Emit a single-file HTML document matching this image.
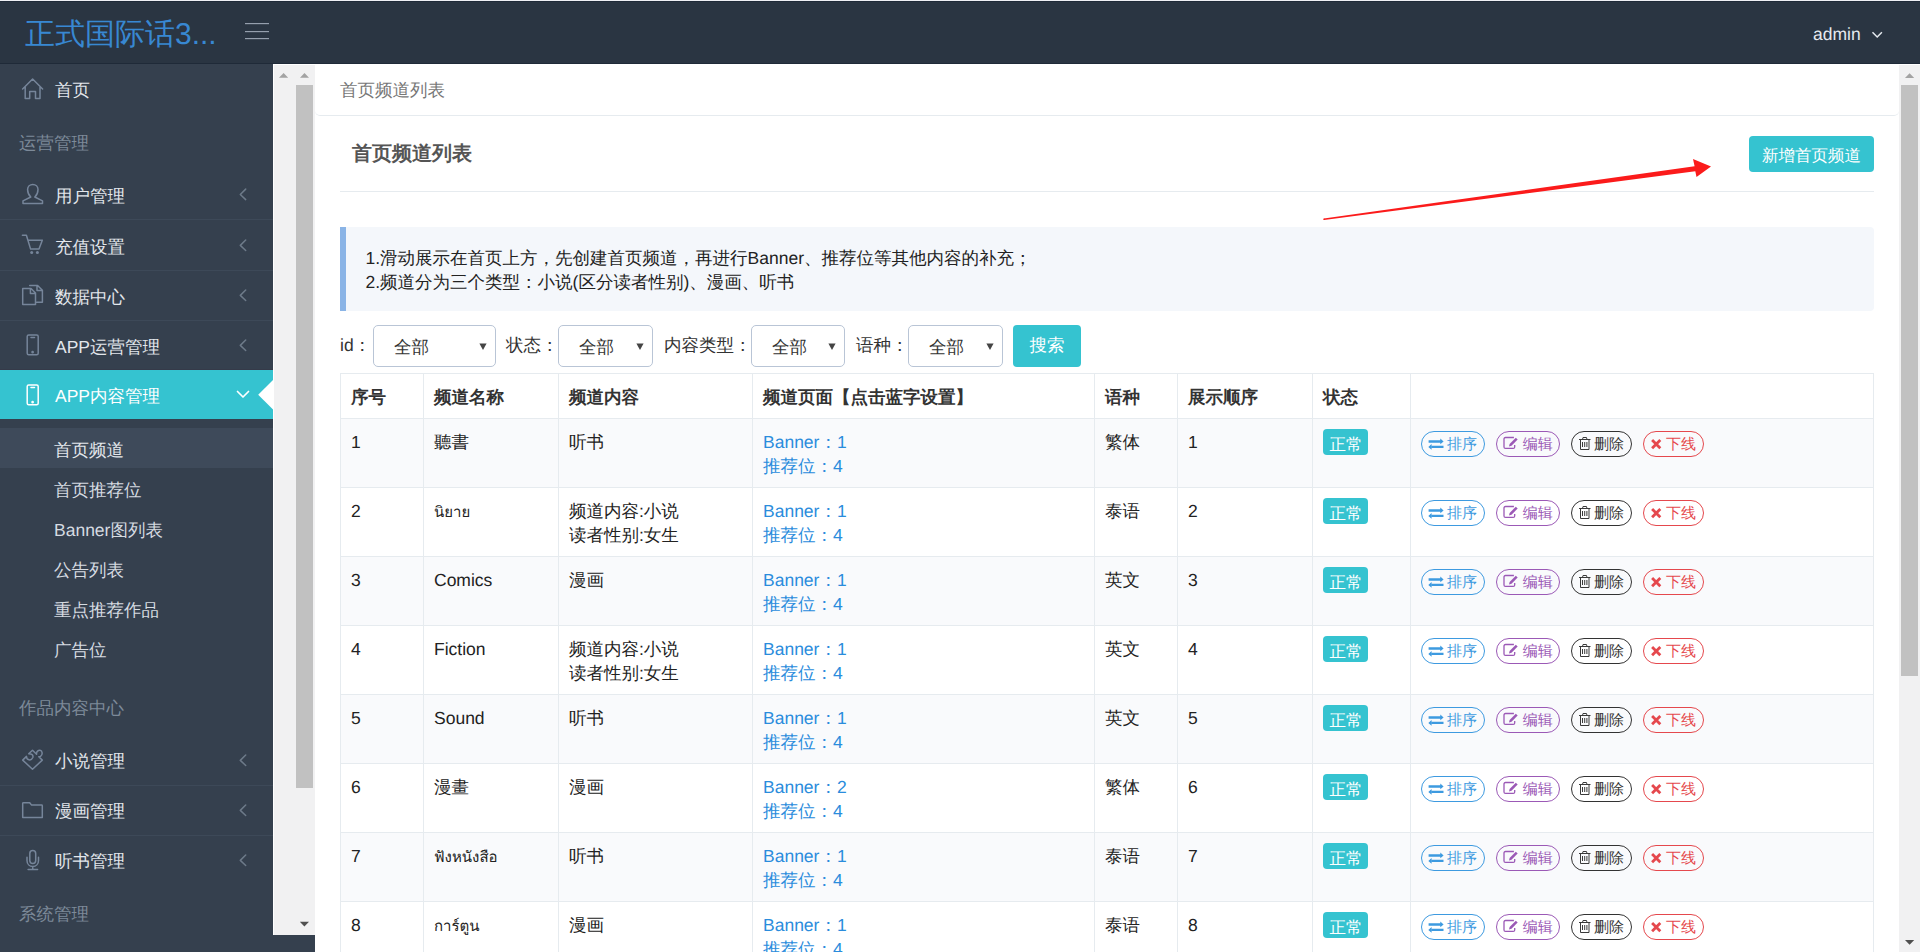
<!DOCTYPE html>
<html><head><meta charset="utf-8">
<style>
*{box-sizing:border-box;margin:0;padding:0}
html,body{width:1920px;height:952px;overflow:hidden;background:#fff;text-rendering:geometricPrecision;font-family:"Liberation Sans",sans-serif;font-size:17.5px;color:#333}
.abs{position:absolute}
#top{position:absolute;left:0;top:0;width:1920px;height:64px;background:#2a3542;border-top:1px solid #eff0f4}
#top:before{content:"";position:absolute;left:0;top:0;width:100%;height:1px;background:#1f2a38}
#top:after{content:"";position:absolute;left:0;bottom:0;width:100%;height:1px;background:#1f2a38}
#logo{position:absolute;left:25px;top:14px;font-size:30px;color:#3888d2;line-height:40px;white-space:nowrap}
.hb{position:absolute;left:245px;width:24px;height:1px;background:#959fad;box-shadow:0 0.6px 0 rgba(149,159,173,.3)}
#admin{position:absolute;left:1813px;top:21px;color:#e5e9ee;font-size:17.5px;line-height:24px}
#side{position:absolute;left:0;top:64px;width:273px;height:888px;background:#35404e;overflow:hidden}
.mi{position:absolute;left:0;width:273px;height:50px;border-bottom:1px solid #3d4958;color:#e3e7ec}
.mi .t{position:absolute;left:55px;top:14px;line-height:24px;white-space:nowrap}
.mi svg.ic{position:absolute;left:22px;top:15px}
.mi .ch{position:absolute;left:238px;top:19px}
.sec{position:absolute;left:19px;color:#7d8a99;line-height:24px;margin-top:1px;white-space:nowrap}
.sub{position:absolute;left:0;width:273px;height:40px;color:#d6dbe1}
.sub .t{position:absolute;left:54px;top:10px;line-height:24px;white-space:nowrap}
#sb1{position:absolute;left:273px;top:64px;width:42px;height:871px;background:#f1f1f2;border-left:1px solid #fff;border-top:1px solid #fff}
#sbb{position:absolute;left:273px;top:935px;width:42px;height:17px;background:#35404e}
#sb2{position:absolute;left:1899px;top:65px;width:21px;height:887px;background:#f1f1f2}
.mi.act{background:#35c3d0;border-bottom:none;height:49px;color:#fff}
.sub.act{background:#3e4a5a;color:#e3e7ec}
#bc{position:absolute;left:315px;top:64px;width:1584px;height:52px;border-bottom:1px solid #e6ebef;border-radius:0 0 5px 5px;padding:14px 0 0 25px;color:#777;line-height:24px}
#ptitle{position:absolute;left:352px;top:142px;font-size:20px;font-weight:bold;color:#555;line-height:24px}
#addbtn{position:absolute;left:1749px;top:136px;width:125px;height:36px;background:#35c3d0;border-radius:4px;color:#fff;font-size:16.5px;line-height:36px;padding-top:1.5px;text-align:center}
#divl{position:absolute;left:340px;top:191px;width:1534px;height:1px;background:#e6ebef}
#info{position:absolute;left:340px;top:227px;width:1534px;height:84px;background:#f4f7fb;border-left:6px solid #8ab4e6;border-radius:0 4px 4px 0;padding:19px 0 0 19.5px;line-height:24px;color:#222}
.lbl{position:absolute;top:332.5px;line-height:24px;color:#333}
.sel{position:absolute;top:325px;height:41.5px;border:1px solid #b9c5d6;border-radius:5px;padding:9px 0 0 20px;line-height:24px;color:#333}
.sel i{position:absolute;right:8px;top:17px;width:7px;height:7px;background:linear-gradient(#0000,#0000)}.sel svg{position:absolute;right:8.4px;top:17px}
#sbtn{position:absolute;left:1013px;top:325px;width:68px;height:42px;background:#35c3d0;border-radius:4px;color:#fff;line-height:41px;text-align:center;font-size:17.5px}
#tbl{position:absolute;left:340px;top:373px;width:1534px;border-collapse:collapse;table-layout:fixed}
#tbl th,#tbl td{border:1px solid #e6ebef;text-align:left;vertical-align:top;line-height:24px;padding:0 10px}
#tbl th{height:45px;padding-top:11px;font-weight:bold;color:#333}
#tbl td{height:69px;padding-top:11px;color:#222}
#tbl tr.odd td{background:#f9fafc}
#tbl td.lk{color:#2a8cdc}
.badge{display:inline-block;background:#35c3d0;color:#fff;border-radius:4px;height:26px;line-height:26px;padding:3px 0 0 1px;width:45px;text-align:center;font-size:16.5px;font-weight:normal;margin-top:-1px;vertical-align:top;overflow:hidden}
.ops{white-space:nowrap}.thai{font-size:15px}
.ob{display:inline-block;height:26px;border:1px solid;border-radius:13px;line-height:24px;font-size:15px;margin-right:11px;vertical-align:top;margin-top:1px;padding:0;text-align:center}
.ob{position:relative}.ob svg{position:absolute;left:0;top:0}.ob b{position:absolute;top:1px;font-weight:normal;line-height:24px}.b1 b{left:25px}.b2 b{left:25.8px}.b3 b,.b4 b{left:22px}
.b1,.b2{width:64px}.b3,.b4{width:61px}
.b1{border-color:#3d9ae0;color:#3d9ae0}
.b2{border-color:#9b59b6;color:#9b59b6}
.b3{border-color:#333;color:#333}
.b4{border-color:#e5484d;color:#e5484d}
.thumb{position:absolute;background:#c1c1c1}
</style></head><body>
<div id="top">
  <div id="logo">正式国际话3...</div>
  <div class="hb" style="top:22px"></div>
  <div class="hb" style="top:30px"></div>
  <div class="hb" style="top:37px"></div>
  <div id="admin">admin</div>
</div>
<div id="side">
  <div class="mi" style="top:0;border-bottom:none"><span class="t">首页</span></div>
  <div class="sec" style="top:66px">运营管理</div>
  <div class="mi" style="top:106px"><span class="t">用户管理</span></div>
  <div class="mi" style="top:157px"><span class="t">充值设置</span></div>
  <div class="mi" style="top:207px"><span class="t">数据中心</span></div>
  <div class="mi" style="top:257px;height:49px;border-bottom-color:#353a49"><span class="t">APP运营管理</span></div>
  <div class="mi act" style="top:306px"><span class="t">APP内容管理</span></div>
  <div class="sub act" style="top:364px"><span class="t">首页频道</span></div>
  <div class="sub" style="top:404px"><span class="t">首页推荐位</span></div>
  <div class="sub" style="top:444px"><span class="t">Banner图列表</span></div>
  <div class="sub" style="top:484px"><span class="t">公告列表</span></div>
  <div class="sub" style="top:524px"><span class="t">重点推荐作品</span></div>
  <div class="sub" style="top:564px"><span class="t">广告位</span></div>
  <div class="sec" style="top:631px">作品内容中心</div>
  <div class="mi" style="top:672px"><span class="t" style="top:12.5px">小说管理</span></div>
  <div class="mi" style="top:722px"><span class="t" style="top:12.5px">漫画管理</span></div>
  <div class="mi" style="top:772px;border-bottom:none"><span class="t" style="top:12.5px">听书管理</span></div>
  <div class="sec" style="top:837px">系统管理</div>
</div>
<svg id="icons" width="320" height="952" style="position:absolute;left:0;top:0" fill="none" stroke="#76859a" stroke-width="1.5" stroke-linejoin="round" stroke-linecap="round">
  <path d="M22.6,89 L32.6,79 L42.6,89 M25.2,87 V98.6 H29.7 V91.5 H35.5 V98.6 H40 V87"/>
  <path d="M30.8,197 C28.6,195 27.6,192 27.6,189.5 C27.6,186.5 30,184.4 32.8,184.4 C35.6,184.4 38,186.5 38,189.5 C38,192 37,195 34.8,197 L42.5,200.8 V203.4 H23 V200.8 Z"/>
  <path d="M22.4,235.2 H26.4 L30.6,249.1 H39 L42.3,240.3 H28.3"/>
  <circle cx="31.7" cy="252.4" r="1.5" fill="#76859a" stroke="none"/><circle cx="37.4" cy="252.4" r="1.5" fill="#76859a" stroke="none"/>
  <path d="M22.7,288.5 H31 L35.5,293 V304.6 H22.7 Z M30.4,288.5 V293.5 H35.5 M29.7,285.5 H37.6 L42.4,290.3 V302.2 H36.8 M37,285.5 V290.6 H42.4"/>
  <rect x="27.2" y="335" width="11" height="19.8" rx="1.5"/><path d="M31,337.6 H34.5"/><circle cx="32.6" cy="352.2" r="0.6" fill="#76859a"/>
  <path d="M22.7,760.1 L26.5,756.4 C26.5,760 31,761.5 32.8,757.5 C33.5,755.5 32,754 30.5,754 L28.7,753.8 L32.5,750.2 L36.6,754.2 C36.2,751.5 38.5,750 40,750.2 C42.5,750.6 43,754.5 40.5,756.4 L38.8,756.7 L42.3,760.1 L32.5,769.3 Z"/>
  <path d="M22.7,817.6 V803.3 Q22.7,802.7 23.5,802.7 H29.7 L31.6,805.1 H41.6 Q42.3,805.1 42.3,805.8 V817.6 Z"/>
  <rect x="29.8" y="850.5" width="5.9" height="13" rx="2.95"/><path d="M27,857.3 V860.5 C27,864 29.5,866.5 32.75,866.5 C36,866.5 38.5,864 38.5,860.5 V857.3 M32.75,866.5 V869.4 M28.1,869.4 H37.6"/>
  <g stroke="#6d7a89"><path d="M245.7,189.1 L240.3,194.5 L245.7,199.6"/><path d="M245.7,240 L240.3,245.4 L245.7,250.5"/><path d="M245.7,290 L240.3,295.4 L245.7,300.5"/><path d="M245.7,340 L240.3,345.4 L245.7,350.5"/>
  <path d="M245.7,755 L240.3,760.4 L245.7,765.5"/><path d="M245.7,805 L240.3,810.4 L245.7,815.5"/><path d="M245.7,855 L240.3,860.4 L245.7,865.5"/></g>
  <g stroke="#fff"><rect x="27.2" y="385" width="11" height="19.8" rx="1.5"/><path d="M31,387.6 H34.5"/><circle cx="32.6" cy="402.2" r="0.6" fill="#fff"/>
  <path d="M237.5,391.5 L243,397 L248.5,391.5" stroke-width="1.7"/></g>
  <path d="M273,380 L258.2,394.8 L273,409.6 Z" fill="#fff" stroke="none"/>
</svg>
<div id="sb1"><div class="thumb" style="left:22px;top:20px;width:17px;height:703px"></div></div>

<div id="sbb"></div>
<div id="sb2"><div class="thumb" style="left:2px;top:20px;width:17px;height:591px"></div></div>
<div id="main">
  <div id="bc">首页频道列表</div>
  <div id="ptitle">首页频道列表</div>
  <div id="addbtn">新增首页频道</div>
  <div id="divl"></div>
  <svg style="position:absolute;left:0;top:0" width="1920" height="952"><path d="M1323.9,218.4 L1694.6,166.2 L1693,159 L1711,166.5 L1696.5,177 L1695.3,171.2 L1324.1,220 Z" fill="#fb1b1b"/><circle cx="1324" cy="219.2" r="0.8" fill="#fb1b1b"/></svg>
  <div id="info"><div>1.滑动展示在首页上方，先创建首页频道，再进行Banner、推荐位等其他内容的补充；</div><div>2.频道分为三个类型：小说(区分读者性别)、漫画、听书</div></div>
  <div class="lbl" style="left:340px">id：</div>
  <div class="sel" style="left:373px;width:123px">全部<svg width="8" height="8"><path d="M0.4,0.6 H7.6 L4,7 Z" fill="#444"/></svg></div>
  <div class="lbl" style="left:506px">状态：</div>
  <div class="sel" style="left:558px;width:95px">全部<svg width="8" height="8"><path d="M0.4,0.6 H7.6 L4,7 Z" fill="#444"/></svg></div>
  <div class="lbl" style="left:664px">内容类型：</div>
  <div class="sel" style="left:751px;width:94px">全部<svg width="8" height="8"><path d="M0.4,0.6 H7.6 L4,7 Z" fill="#444"/></svg></div>
  <div class="lbl" style="left:856px">语种：</div>
  <div class="sel" style="left:908px;width:95px">全部<svg width="8" height="8"><path d="M0.4,0.6 H7.6 L4,7 Z" fill="#444"/></svg></div>
  <div id="sbtn">搜索</div>
  <table id="tbl">
    <colgroup><col style="width:83px"><col style="width:135px"><col style="width:194px"><col style="width:342px"><col style="width:83px"><col style="width:135px"><col style="width:98px"><col style="width:463px"></colgroup>
    <tr class="hd"><th>序号</th><th>频道名称</th><th>频道内容</th><th>频道页面【点击蓝字设置】</th><th>语种</th><th>展示顺序</th><th>状态</th><th></th></tr>
    <tr class="odd"><td>1</td><td>聽書</td><td>听书</td><td class="lk">Banner：1<br>推荐位：4</td><td>繁体</td><td>1</td><td><span class="badge">正常</span></td><td class="ops"><span class="ob b1"><svg width="62" height="24"><path d="M6.6,9.45 H19 M9.3,14.9 H21.5" stroke="#3d9ae0" stroke-width="2.4"/><path d="M18.3,6.6 L21.6,9.45 L18.3,12.3 Z M9.6,12.1 L6.3,14.9 L9.6,17.7 Z" fill="#3d9ae0"/></svg><b>排序</b></span><span class="ob b2"><svg width="62" height="24"><path d="M16.9,5.5 H8.5 Q7,5.5 7,7 V14.9 Q7,16.4 8.5,16.4 H16.2 Q17.7,16.4 17.7,14.9 V13" fill="none" stroke="#9b59b6" stroke-width="1.3"/><path d="M12,14.6 L12.6,11.9 L18.8,5.7 L20.7,7.6 L14.5,13.8 Z" fill="#9b59b6"/></svg><b>编辑</b></span><span class="ob b3"><svg width="59" height="24"><path d="M7,7.5 H18.5 M10.5,7.5 L11,5.5 H14.5 L15,7.5 M8.5,7.5 V17.5 H17 V7.5 M10.5,10 V15 M12.7,10 V15 M14.9,10 V15" fill="none" stroke="#3a3a3a" stroke-width="1"/></svg><b>删除</b></span><span class="ob b4"><svg width="59" height="24"><path d="M8.1,8.1 L16.3,16.3 M16.3,8.1 L8.1,16.3" stroke="#e5484d" stroke-width="2.8"/></svg><b>下线</b></span></td></tr>
    <tr class="even"><td>2</td><td><span class="thai">นิยาย</span></td><td>频道内容:小说<br>读者性别:女生</td><td class="lk">Banner：1<br>推荐位：4</td><td>泰语</td><td>2</td><td><span class="badge">正常</span></td><td class="ops"><span class="ob b1"><svg width="62" height="24"><path d="M6.6,9.45 H19 M9.3,14.9 H21.5" stroke="#3d9ae0" stroke-width="2.4"/><path d="M18.3,6.6 L21.6,9.45 L18.3,12.3 Z M9.6,12.1 L6.3,14.9 L9.6,17.7 Z" fill="#3d9ae0"/></svg><b>排序</b></span><span class="ob b2"><svg width="62" height="24"><path d="M16.9,5.5 H8.5 Q7,5.5 7,7 V14.9 Q7,16.4 8.5,16.4 H16.2 Q17.7,16.4 17.7,14.9 V13" fill="none" stroke="#9b59b6" stroke-width="1.3"/><path d="M12,14.6 L12.6,11.9 L18.8,5.7 L20.7,7.6 L14.5,13.8 Z" fill="#9b59b6"/></svg><b>编辑</b></span><span class="ob b3"><svg width="59" height="24"><path d="M7,7.5 H18.5 M10.5,7.5 L11,5.5 H14.5 L15,7.5 M8.5,7.5 V17.5 H17 V7.5 M10.5,10 V15 M12.7,10 V15 M14.9,10 V15" fill="none" stroke="#3a3a3a" stroke-width="1"/></svg><b>删除</b></span><span class="ob b4"><svg width="59" height="24"><path d="M8.1,8.1 L16.3,16.3 M16.3,8.1 L8.1,16.3" stroke="#e5484d" stroke-width="2.8"/></svg><b>下线</b></span></td></tr>
    <tr class="odd"><td>3</td><td>Comics</td><td>漫画</td><td class="lk">Banner：1<br>推荐位：4</td><td>英文</td><td>3</td><td><span class="badge">正常</span></td><td class="ops"><span class="ob b1"><svg width="62" height="24"><path d="M6.6,9.45 H19 M9.3,14.9 H21.5" stroke="#3d9ae0" stroke-width="2.4"/><path d="M18.3,6.6 L21.6,9.45 L18.3,12.3 Z M9.6,12.1 L6.3,14.9 L9.6,17.7 Z" fill="#3d9ae0"/></svg><b>排序</b></span><span class="ob b2"><svg width="62" height="24"><path d="M16.9,5.5 H8.5 Q7,5.5 7,7 V14.9 Q7,16.4 8.5,16.4 H16.2 Q17.7,16.4 17.7,14.9 V13" fill="none" stroke="#9b59b6" stroke-width="1.3"/><path d="M12,14.6 L12.6,11.9 L18.8,5.7 L20.7,7.6 L14.5,13.8 Z" fill="#9b59b6"/></svg><b>编辑</b></span><span class="ob b3"><svg width="59" height="24"><path d="M7,7.5 H18.5 M10.5,7.5 L11,5.5 H14.5 L15,7.5 M8.5,7.5 V17.5 H17 V7.5 M10.5,10 V15 M12.7,10 V15 M14.9,10 V15" fill="none" stroke="#3a3a3a" stroke-width="1"/></svg><b>删除</b></span><span class="ob b4"><svg width="59" height="24"><path d="M8.1,8.1 L16.3,16.3 M16.3,8.1 L8.1,16.3" stroke="#e5484d" stroke-width="2.8"/></svg><b>下线</b></span></td></tr>
    <tr class="even"><td>4</td><td>Fiction</td><td>频道内容:小说<br>读者性别:女生</td><td class="lk">Banner：1<br>推荐位：4</td><td>英文</td><td>4</td><td><span class="badge">正常</span></td><td class="ops"><span class="ob b1"><svg width="62" height="24"><path d="M6.6,9.45 H19 M9.3,14.9 H21.5" stroke="#3d9ae0" stroke-width="2.4"/><path d="M18.3,6.6 L21.6,9.45 L18.3,12.3 Z M9.6,12.1 L6.3,14.9 L9.6,17.7 Z" fill="#3d9ae0"/></svg><b>排序</b></span><span class="ob b2"><svg width="62" height="24"><path d="M16.9,5.5 H8.5 Q7,5.5 7,7 V14.9 Q7,16.4 8.5,16.4 H16.2 Q17.7,16.4 17.7,14.9 V13" fill="none" stroke="#9b59b6" stroke-width="1.3"/><path d="M12,14.6 L12.6,11.9 L18.8,5.7 L20.7,7.6 L14.5,13.8 Z" fill="#9b59b6"/></svg><b>编辑</b></span><span class="ob b3"><svg width="59" height="24"><path d="M7,7.5 H18.5 M10.5,7.5 L11,5.5 H14.5 L15,7.5 M8.5,7.5 V17.5 H17 V7.5 M10.5,10 V15 M12.7,10 V15 M14.9,10 V15" fill="none" stroke="#3a3a3a" stroke-width="1"/></svg><b>删除</b></span><span class="ob b4"><svg width="59" height="24"><path d="M8.1,8.1 L16.3,16.3 M16.3,8.1 L8.1,16.3" stroke="#e5484d" stroke-width="2.8"/></svg><b>下线</b></span></td></tr>
    <tr class="odd"><td>5</td><td>Sound</td><td>听书</td><td class="lk">Banner：1<br>推荐位：4</td><td>英文</td><td>5</td><td><span class="badge">正常</span></td><td class="ops"><span class="ob b1"><svg width="62" height="24"><path d="M6.6,9.45 H19 M9.3,14.9 H21.5" stroke="#3d9ae0" stroke-width="2.4"/><path d="M18.3,6.6 L21.6,9.45 L18.3,12.3 Z M9.6,12.1 L6.3,14.9 L9.6,17.7 Z" fill="#3d9ae0"/></svg><b>排序</b></span><span class="ob b2"><svg width="62" height="24"><path d="M16.9,5.5 H8.5 Q7,5.5 7,7 V14.9 Q7,16.4 8.5,16.4 H16.2 Q17.7,16.4 17.7,14.9 V13" fill="none" stroke="#9b59b6" stroke-width="1.3"/><path d="M12,14.6 L12.6,11.9 L18.8,5.7 L20.7,7.6 L14.5,13.8 Z" fill="#9b59b6"/></svg><b>编辑</b></span><span class="ob b3"><svg width="59" height="24"><path d="M7,7.5 H18.5 M10.5,7.5 L11,5.5 H14.5 L15,7.5 M8.5,7.5 V17.5 H17 V7.5 M10.5,10 V15 M12.7,10 V15 M14.9,10 V15" fill="none" stroke="#3a3a3a" stroke-width="1"/></svg><b>删除</b></span><span class="ob b4"><svg width="59" height="24"><path d="M8.1,8.1 L16.3,16.3 M16.3,8.1 L8.1,16.3" stroke="#e5484d" stroke-width="2.8"/></svg><b>下线</b></span></td></tr>
    <tr class="even"><td>6</td><td>漫畫</td><td>漫画</td><td class="lk">Banner：2<br>推荐位：4</td><td>繁体</td><td>6</td><td><span class="badge">正常</span></td><td class="ops"><span class="ob b1"><svg width="62" height="24"><path d="M6.6,9.45 H19 M9.3,14.9 H21.5" stroke="#3d9ae0" stroke-width="2.4"/><path d="M18.3,6.6 L21.6,9.45 L18.3,12.3 Z M9.6,12.1 L6.3,14.9 L9.6,17.7 Z" fill="#3d9ae0"/></svg><b>排序</b></span><span class="ob b2"><svg width="62" height="24"><path d="M16.9,5.5 H8.5 Q7,5.5 7,7 V14.9 Q7,16.4 8.5,16.4 H16.2 Q17.7,16.4 17.7,14.9 V13" fill="none" stroke="#9b59b6" stroke-width="1.3"/><path d="M12,14.6 L12.6,11.9 L18.8,5.7 L20.7,7.6 L14.5,13.8 Z" fill="#9b59b6"/></svg><b>编辑</b></span><span class="ob b3"><svg width="59" height="24"><path d="M7,7.5 H18.5 M10.5,7.5 L11,5.5 H14.5 L15,7.5 M8.5,7.5 V17.5 H17 V7.5 M10.5,10 V15 M12.7,10 V15 M14.9,10 V15" fill="none" stroke="#3a3a3a" stroke-width="1"/></svg><b>删除</b></span><span class="ob b4"><svg width="59" height="24"><path d="M8.1,8.1 L16.3,16.3 M16.3,8.1 L8.1,16.3" stroke="#e5484d" stroke-width="2.8"/></svg><b>下线</b></span></td></tr>
    <tr class="odd"><td>7</td><td><span class="thai">ฟังหนังสือ</span></td><td>听书</td><td class="lk">Banner：1<br>推荐位：4</td><td>泰语</td><td>7</td><td><span class="badge">正常</span></td><td class="ops"><span class="ob b1"><svg width="62" height="24"><path d="M6.6,9.45 H19 M9.3,14.9 H21.5" stroke="#3d9ae0" stroke-width="2.4"/><path d="M18.3,6.6 L21.6,9.45 L18.3,12.3 Z M9.6,12.1 L6.3,14.9 L9.6,17.7 Z" fill="#3d9ae0"/></svg><b>排序</b></span><span class="ob b2"><svg width="62" height="24"><path d="M16.9,5.5 H8.5 Q7,5.5 7,7 V14.9 Q7,16.4 8.5,16.4 H16.2 Q17.7,16.4 17.7,14.9 V13" fill="none" stroke="#9b59b6" stroke-width="1.3"/><path d="M12,14.6 L12.6,11.9 L18.8,5.7 L20.7,7.6 L14.5,13.8 Z" fill="#9b59b6"/></svg><b>编辑</b></span><span class="ob b3"><svg width="59" height="24"><path d="M7,7.5 H18.5 M10.5,7.5 L11,5.5 H14.5 L15,7.5 M8.5,7.5 V17.5 H17 V7.5 M10.5,10 V15 M12.7,10 V15 M14.9,10 V15" fill="none" stroke="#3a3a3a" stroke-width="1"/></svg><b>删除</b></span><span class="ob b4"><svg width="59" height="24"><path d="M8.1,8.1 L16.3,16.3 M16.3,8.1 L8.1,16.3" stroke="#e5484d" stroke-width="2.8"/></svg><b>下线</b></span></td></tr>
    <tr class="even"><td>8</td><td><span class="thai">การ์ตูน</span></td><td>漫画</td><td class="lk">Banner：1<br>推荐位：4</td><td>泰语</td><td>8</td><td><span class="badge">正常</span></td><td class="ops"><span class="ob b1"><svg width="62" height="24"><path d="M6.6,9.45 H19 M9.3,14.9 H21.5" stroke="#3d9ae0" stroke-width="2.4"/><path d="M18.3,6.6 L21.6,9.45 L18.3,12.3 Z M9.6,12.1 L6.3,14.9 L9.6,17.7 Z" fill="#3d9ae0"/></svg><b>排序</b></span><span class="ob b2"><svg width="62" height="24"><path d="M16.9,5.5 H8.5 Q7,5.5 7,7 V14.9 Q7,16.4 8.5,16.4 H16.2 Q17.7,16.4 17.7,14.9 V13" fill="none" stroke="#9b59b6" stroke-width="1.3"/><path d="M12,14.6 L12.6,11.9 L18.8,5.7 L20.7,7.6 L14.5,13.8 Z" fill="#9b59b6"/></svg><b>编辑</b></span><span class="ob b3"><svg width="59" height="24"><path d="M7,7.5 H18.5 M10.5,7.5 L11,5.5 H14.5 L15,7.5 M8.5,7.5 V17.5 H17 V7.5 M10.5,10 V15 M12.7,10 V15 M14.9,10 V15" fill="none" stroke="#3a3a3a" stroke-width="1"/></svg><b>删除</b></span><span class="ob b4"><svg width="59" height="24"><path d="M8.1,8.1 L16.3,16.3 M16.3,8.1 L8.1,16.3" stroke="#e5484d" stroke-width="2.8"/></svg><b>下线</b></span></td></tr>

  </table>
</div>
<svg style="position:absolute;left:0;top:0" width="1920" height="952">
<path d="M279,77.8 L283.6,73 L288.2,77.8 Z M300,77.8 L304.5,73 L309,77.8 Z M1905,78 L1909.6,73.2 L1914.2,78 Z" fill="#a3a3a3"/>
<path d="M299.8,921.8 L304.4,926.6 L309,921.8 Z M1905,940 L1909.6,944.8 L1914.2,940 Z" fill="#505050"/>
<path d="M1872.5,32.3 L1877.2,37 L1881.9,32.3" fill="none" stroke="#e5e9ee" stroke-width="1.5"/>
</svg>
</body></html>
